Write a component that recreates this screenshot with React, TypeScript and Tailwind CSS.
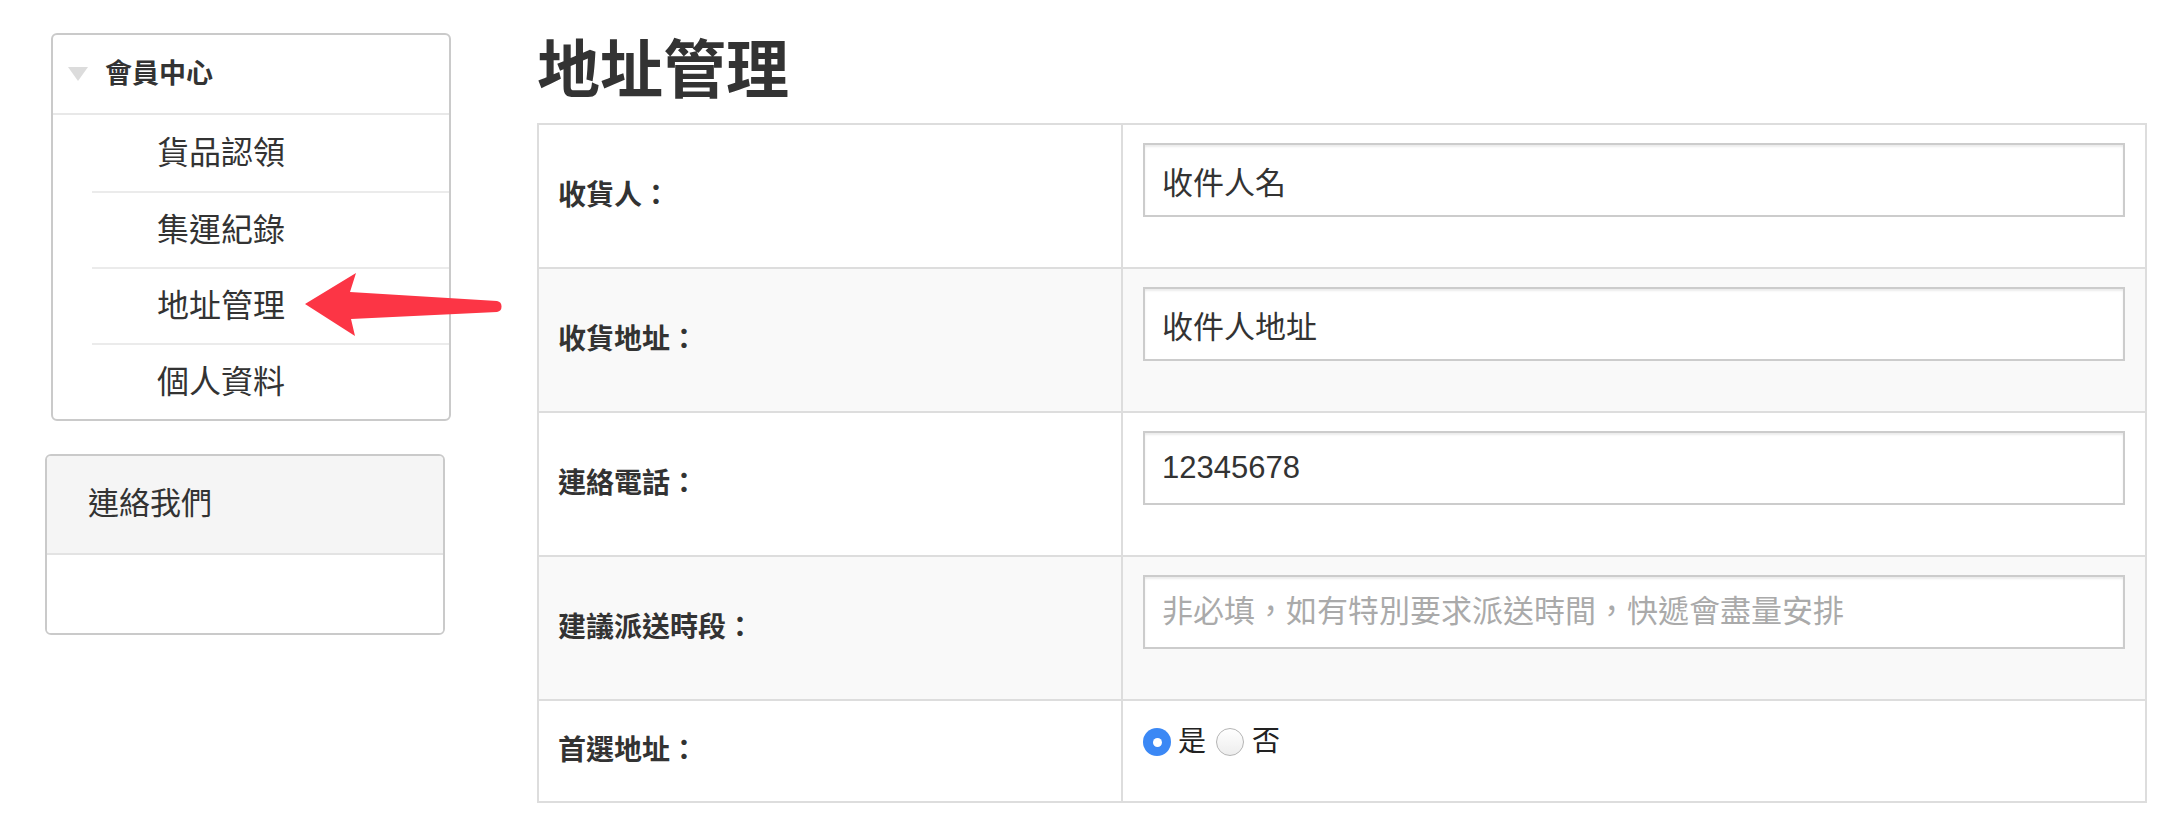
import React from "react";

const menuItems = ["貨品認領", "集運紀錄", "地址管理", "個人資料"];

interface FieldRowProps {
  label: string;
  striped?: boolean;
  last?: boolean;
  children: React.ReactNode;
}

function FieldRow({ label, striped, last, children }: FieldRowProps) {
  return (
    <div
      className={`flex ${last ? "h-[100px]" : "h-[144px] border-b-2 border-[#ddd]"} ${
        striped ? "bg-[#f9f9f9]" : "bg-white"
      }`}
    >
      <div className="w-[584px] shrink-0 border-r-2 border-[#ddd] flex items-center pl-[19px] text-[28px] font-bold text-[#333]">
        {label}
      </div>
      <div className="flex-1 pt-[18px] px-[20px]">{children}</div>
    </div>
  );
}

function TextField({ value, placeholder }: { value?: string; placeholder?: string }) {
  return (
    <input
      className="block w-full h-[74px] border-2 border-[#ccc] bg-white pl-[17px] text-[31px] text-[#333] placeholder:text-[#aaa] shadow-[inset_0_2px_2px_rgba(0,0,0,0.08)] outline-none"
      defaultValue={value}
      placeholder={placeholder}
    />
  );
}

export default function App() {
  return (
    <div className="relative w-[2158px] h-[820px] bg-white flex font-['Liberation_Sans','Noto_Sans_CJK_TC',sans-serif] overflow-hidden">
      {/* Sidebar */}
      <div className="w-[537px] shrink-0 flex flex-col">
        <div className="ml-[51px] mt-[33px] w-[400px] border-2 border-[#cacaca] rounded-[6px] bg-white">
          <div className="h-[80px] flex items-center border-b-2 border-[#e8e8e8]">
            <span className="ml-[15px] w-0 h-0 border-l-[10px] border-r-[10px] border-t-[14px] border-l-transparent border-r-transparent border-t-[#dcdcdc]" />
            <span className="ml-[17px] text-[27px] font-bold text-[#333]">會員中心</span>
          </div>
          {menuItems.map((item, i) => (
            <div
              key={item}
              className={`ml-[39px] h-[76px] flex items-center pl-[65px] text-[32px] text-[#333] ${
                i > 0 ? "border-t-2 border-[#ebebeb]" : ""
              }`}
            >
              {item}
            </div>
          ))}
        </div>

        <div className="ml-[45px] mt-[33px] w-[400px] border-2 border-[#cacaca] rounded-[6px] overflow-hidden">
          <div className="h-[99px] bg-[#f5f5f5] border-b-2 border-[#e3e3e3] flex items-center pl-[41px] text-[31px] text-[#333]">
            連絡我們
          </div>
          <div className="h-[78px] bg-white" />
        </div>
      </div>

      {/* Main */}
      <div className="flex-1 flex flex-col">
        <h1 className="mt-[39px] text-[63px] leading-[63px] font-bold text-[#333]">地址管理</h1>
        <div className="mt-[21px] w-[1610px] border-2 border-[#ddd]">
          <FieldRow label="收貨人：">
            <TextField value="收件人名" />
          </FieldRow>
          <FieldRow label="收貨地址：" striped>
            <TextField value="收件人地址" />
          </FieldRow>
          <FieldRow label="連絡電話：">
            <TextField value="12345678" />
          </FieldRow>
          <FieldRow label="建議派送時段：" striped>
            <TextField placeholder="非必填，如有特別要求派送時間，快遞會盡量安排" />
          </FieldRow>
          <FieldRow label="首選地址：" last>
            <div className="flex items-center pt-[2px] text-[28px] text-[#222]">
              <span className="w-[28px] h-[28px] rounded-full bg-[#3b88f5] flex items-center justify-center">
                <span className="w-[9px] h-[9px] rounded-full bg-white" />
              </span>
              <span className="ml-[7px]">是</span>
              <span className="ml-[10px] w-[28px] h-[28px] rounded-full border border-[#b5b5b5] bg-gradient-to-b from-white to-[#ededed]" />
              <span className="ml-[8px]">否</span>
            </div>
          </FieldRow>
        </div>
      </div>

      {/* Annotation arrow */}
      <svg
        className="absolute left-[300px] top-[265px]"
        width="210"
        height="80"
        viewBox="300 265 210 80"
      >
        <path
          d="M305 304 L356 273 L350 292 L497 301 A5.6 5.6 0 0 1 497 312 L351 319 L355 336 Z"
          fill="#fc3545"
        />
      </svg>
    </div>
  );
}
